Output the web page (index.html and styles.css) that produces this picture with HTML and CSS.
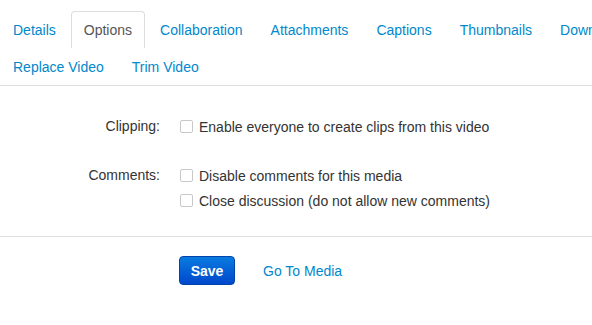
FILE: index.html
```html
<!DOCTYPE html>
<html lang="en">

<head>
    <meta charset="utf-8">
    <title>Edit Media - Options</title>
    <link rel="stylesheet" href="styles.css">
</head>

<body>
    <nav class="tabs">
        <div class="tabrow">
            <a href="#" class="tab">Details</a>
            <a href="#" class="tab active">Options</a>
            <a href="#" class="tab">Collaboration</a>
            <a href="#" class="tab">Attachments</a>
            <a href="#" class="tab">Captions</a>
            <a href="#" class="tab">Thumbnails</a>
            <a href="#" class="tab">Downloads</a>
        </div>
        <div class="tabrow">
            <a href="#" class="tab">Replace Video</a>
            <a href="#" class="tab">Trim Video</a>
        </div>
    </nav>

    <form class="options">
        <div class="group">
            <span class="label">Clipping:</span>
            <div class="controls">
                <label class="check"><span class="box"></span>Enable everyone to create clips from this video</label>
            </div>
        </div>
        <div class="group">
            <span class="label">Comments:</span>
            <div class="controls">
                <label class="check"><span class="box"></span>Disable comments for this media</label>
                <label class="check"><span class="box"></span>Close discussion (do not allow new comments)</label>
            </div>
        </div>

        <div class="actions">
            <button type="button" class="save">Save</button>
            <a href="#" class="golink">Go To Media</a>
        </div>
    </form>
</body>

</html>
```

FILE: styles.css
```css
body {
    margin: 0;
    padding: 0;
    overflow: hidden;
    font-family: "Liberation Sans", Arial, sans-serif;
    font-size: 14px;
    color: #333;
    background-color: white;
}

.tabs {
    padding-top: 11px;
    border-bottom: 1px solid #ddd;
}

.tabrow {
    display: flex;
    flex-wrap: nowrap;
    white-space: nowrap;
}

.tab {
    display: block;
    padding: 8px 12px;
    margin-right: 2px;
    line-height: 20px;
    border: 1px solid transparent;
    border-bottom: none;
    border-radius: 4px 4px 0 0;
    color: #0088cc;
    text-decoration: none;
}

.tab.active {
    color: #555;
    border-color: #ddd;
}

.options {
    padding-top: 28px;
}

.group {
    display: flex;
    margin-bottom: 24px;
}

.label {
    width: 160px;
    text-align: right;
    line-height: 25px;
    flex-shrink: 0;
}

.controls {
    display: flex;
    flex-direction: column;
    padding-left: 20px;
}

.check {
    display: flex;
    align-items: center;
    height: 25px;
}

.box {
    width: 11px;
    height: 11px;
    border: 1px solid #c8c8c8;
    border-radius: 2px;
    margin-right: 6px;
    background-color: white;
}

.actions {
    display: flex;
    align-items: center;
    border-top: 1px solid #e0e0e0;
    margin-top: -1px;
    padding: 19px 0 0 179px;
}

.save {
    width: 56px;
    height: 29px;
    padding: 0;
    font-family: "Liberation Sans", Arial, sans-serif;
    font-size: 14px;
    font-weight: 700;
    color: white;
    border: 1px solid #0044aa;
    border-radius: 4px;
    background-image: linear-gradient(#0a7be0, #0048cc);
}

.golink {
    margin-left: 28px;
    color: #0088cc;
    text-decoration: none;
}
```
